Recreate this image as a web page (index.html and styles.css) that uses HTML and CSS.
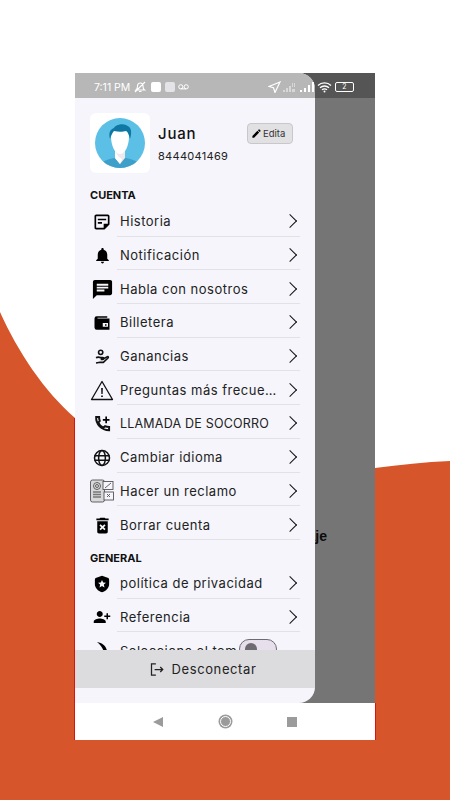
FILE: index.html
```html
<!DOCTYPE html>
<html lang="es">
<head>
<meta charset="UTF-8" />
<meta name="viewport" content="width=device-width, initial-scale=1" />
<title>Menu</title>
<link rel="stylesheet" href="styles.css">
</head>
<body>
    <svg class="backdrop" viewBox="0 0 450 800" aria-hidden="true">
        <path fill="#d6552a" d="M0 312C18 352 44 391 75 418L375 468C400 465 425 462 450 461V800H0Z" />
        <path fill="none" stroke="#d8140f" d="M74.5 418V740M375.500 703V740" />
    </svg>

    <div class="phone">
        <div class="screen">
            <div class="screen-status"></div>
            <p class="screen-text">Mensaje</p>

            <div class="status-icons">
                <div class="status-left">
                    <span class="status-time">7:11 PM</span>
                    <svg width="14" height="12" viewBox="0 0 14 12"><path fill="none" stroke="#fff" stroke-width="1.100" d="M3 9c1.500-1 1.500-2 1.500-4S6 2 7.500 2 10 3 10 5s0 3 1.500 4zM2 11 12 1M6 10.500h2.500" /></svg>
                    <span class="status-box"></span>
                    <span class="status-box status-box-mail"></span>
                    <svg width="11" height="6" viewBox="0 0 11 6"><path fill="none" stroke="#fff" d="M2.800.7a2 2 0 1 1 0 4.200 2 2 0 0 1 0-4.200zm5.400 0a2 2 0 1 1 0 4.200 2 2 0 0 1 0-4.200zM2.800 4.900h5.400" /></svg>
                </div>
                <div class="status-right">
                    <svg width="13" height="12" viewBox="0 0 13 12"><path fill="none" stroke="#fff" stroke-width="1.200" d="M12 1 1 5.500l4.500 1.200L7 11.500z" /></svg>
                    <svg width="15" height="10" viewBox="0 0 15 10"><path fill="#d8d8d8" d="M0 8h2v2H0zM3 6h2v4H3zM6 4h2v6H6zM9 1h1v4H9zM11 1h1v4h-1zM9 7h3v3H9z" /></svg>
                    <svg width="15" height="10" viewBox="0 0 15 10"><path fill="#fff" d="M0 8h2v2H0zM4 6h2v4H4zM8 3h2v7H8zM12 0h2v10h-2z" /></svg>
                    <svg width="15" height="12" viewBox="0 0 15 12"><path fill="none" stroke="#fff" stroke-width="1.300" d="M1 4.500c3.500-3.400 9.500-3.400 13 0M3 6.700c2.500-2.300 6.500-2.300 9 0M5 8.800c1.500-1.200 3.500-1.200 5 0" /><circle cx="7.500" cy="10.600" r="1" fill="#fff" /></svg>
                    <span class="battery">2</span>
                </div>
            </div>
        </div>

        <nav class="navbar">
            <span class="nav-back"></span>
            <span class="nav-home"></span>
            <span class="nav-recent"></span>
        </nav>

        <aside class="drawer">
            <div class="drawer-status"></div>

            <div class="drawer-list">
                <div class="profile">
                    <div class="avatar">
                        <svg width="50" height="50" viewBox="0 0 50 50">
                            <defs><clipPath id="avatar-clip"><circle cx="25" cy="25" r="25" /></clipPath></defs>
                            <circle cx="25" cy="25" r="25" fill="#5cc0e6" />
                            <g clip-path="url(#avatar-clip)">
                                <path fill="#3f9fcb" d="M4 50c1-6 6-8 15-10h12c9 2 14 4 15 10z" />
                                <path fill="#efe9ec" d="M20 33h10v7l-5 6-5-6z" />
                                <path fill="#fff" d="M20 33v7l5 6 2-5-4-3z" />
                                <path fill="#fff" d="M16 18c0-6 4-8 9-8s9 2 9 8c0 10-4 18-9 18s-9-8-9-18z" />
                                <path fill="#0f77a4" d="M15 21c-2-7 1-10 4-11 1-3 8-5 12-3 1 1 3 1 4 3 2 3 1 8 0 11-1-4-2-7-4-8-3 1-8 1-12 0-2 2-3 5-4 8z" />
                            </g>
                        </svg>
                    </div>
                    <div class="profile-info">
                        <div class="profile-name">Juan</div>
                        <div class="profile-phone">8444041469</div>
                    </div>
                    <button class="edit-btn">
                        <svg width="11" height="11" viewBox="0 0 24 24"><path d="M3 17.250V21h3.750L17.810 9.940l-3.750-3.750L3 17.250zM20.710 7.040c.39-.39.39-1.020 0-1.410l-2.340-2.340c-.39-.39-1.020-.39-1.410 0l-1.830 1.830 3.750 3.750 1.830-1.830z" /></svg>
                        Edita
                    </button>
                </div>

                <h2 class="section-title">CUENTA</h2>

                <div class="menu-row">
                    <span class="menu-icon"><svg width="20" height="20" viewBox="0 0 24 24"><path d="M19 5v9h-5v5H5V5h14m0-2H5c-1.100 0-2 .9-2 2v14c0 1.100.9 2 2 2h10l6-6V5c0-1.100-.9-2-2-2zm-7 11H7v-2h5v2zm5-4H7V8h10v2z" /></svg></span>
                    <div class="menu-body"><span class="menu-label">Historia</span><span class="chevron"></span></div>
                </div>
                <div class="menu-row">
                    <span class="menu-icon"><svg width="19" height="19" viewBox="0 0 24 24"><path d="M12 22c1.100 0 2-.9 2-2h-4c0 1.100.89 2 2 2zm6-6v-5c0-3.070-1.640-5.640-4.500-6.320V4c0-.83-.67-1.500-1.500-1.500s-1.500.67-1.500 1.500v.68C7.630 5.360 6 7.920 6 11v5l-2 2v1h16v-1l-2-2z" /></svg></span>
                    <div class="menu-body"><span class="menu-label">Notificación</span><span class="chevron"></span></div>
                </div>
                <div class="menu-row">
                    <span class="menu-icon"><svg width="23" height="23" viewBox="0 0 24 24"><path d="M20 2H4c-1.100 0-1.990.9-1.990 2L2 22l4-4h14c1.100 0 2-.9 2-2V4c0-1.100-.9-2-2-2zM6 9h12v2H6V9zm8 5H6v-2h8v2zm4-6H6V6h12v2z" /></svg></span>
                    <div class="menu-body"><span class="menu-label">Habla con nosotros</span><span class="chevron"></span></div>
                </div>
                <div class="menu-row">
                    <span class="menu-icon"><svg width="18" height="18" viewBox="0 0 24 24"><path fill-rule="evenodd" d="M6 3h13v2H6zM5 6h17v15H5a3 3 0 0 1-3-3V6a3 3 0 0 1 3-3h1v3zm8 6v5h7v-5zm3 1.500h2v2h-2z" /></svg></span>
                    <div class="menu-body"><span class="menu-label">Billetera</span><span class="chevron"></span></div>
                </div>
                <div class="menu-row">
                    <span class="menu-icon"><svg width="16" height="16" viewBox="0 0 24 24"><circle cx="10" cy="5" r="3.200" fill="none" stroke="#111" stroke-width="2.400" /><path fill="none" stroke="#111" stroke-width="2.400" d="M3 13c3-1.500 5-1 7 0h3.500c1.500 0 1.500 2.500 0 2.500H10M14 15l6-3.500c1.500-.5 2 1 1 2l-7 6.500H9l-6 1" /></svg></span>
                    <div class="menu-body"><span class="menu-label">Ganancias</span><span class="chevron"></span></div>
                </div>
                <div class="menu-row">
                    <span class="menu-icon"><svg width="24" height="24" viewBox="0 0 24 24"><path fill="none" stroke="#111" stroke-width="1.300" stroke-linejoin="round" d="M12 3.500 1.500 21.500h21z" /><path d="M11.200 10h1.600l-.2 6h-1.200zM11.200 17.500h1.600v1.600h-1.600z" /></svg></span>
                    <div class="menu-body"><span class="menu-label menu-label-cut">Preguntas más frecuentes</span><span class="chevron"></span></div>
                </div>
                <div class="menu-row">
                    <span class="menu-icon"><svg width="20" height="20" viewBox="0 0 24 24"><path fill="none" stroke="#111" stroke-width="2.400" d="M5 3.500h3.500c0 2 .3 3.500.8 4.800L7.500 10.500c1.300 2.700 3.300 4.700 6 6l2.200-1.800c1.300.5 2.800.8 4.800.8v4C11.500 19.500 4.500 12.500 5 3.500z" /><path d="M21 6h-3V3h-2v3h-3v2h3v3h2V8h3z" /></svg></span>
                    <div class="menu-body"><span class="menu-label menu-label-caps">LLAMADA DE SOCORRO</span><span class="chevron"></span></div>
                </div>
                <div class="menu-row">
                    <span class="menu-icon"><svg width="18" height="18" viewBox="0 0 24 24" fill="none" stroke="#111" stroke-width="2"><circle cx="12" cy="12" r="10" /><ellipse cx="12" cy="12" rx="4.500" ry="10" /><path d="M2 9h20M2 15h20" /></svg></span>
                    <div class="menu-body"><span class="menu-label">Cambiar idioma</span><span class="chevron"></span></div>
                </div>
                <div class="menu-row">
                    <span class="menu-icon"><svg width="24" height="24" viewBox="0 0 24 24" fill="none" stroke="#555" stroke-width=".9"><rect x=".5" y="1" width="14" height="22" rx="2" fill="#d9d9db" /><circle cx="7" cy="7" r="3.500" /><circle cx="7" cy="7" r="1.500" /><path d="M3 13h8M3 15.500h8M3 18h8" stroke="#777" stroke-width="1.300" /><rect x="13" y="2.500" width="10" height="8" fill="#f5f5fb" /><path d="m15 9 6-5" /><rect x="14" y="13" width="9.500" height="8" fill="#f5f5fb" /><path d="m17 15 3 3m0-3-3 3" /></svg></span>
                    <div class="menu-body"><span class="menu-label">Hacer un reclamo</span><span class="chevron"></span></div>
                </div>
                <div class="menu-row">
                    <span class="menu-icon"><svg width="21" height="21" viewBox="0 0 24 24"><path d="M6 19c0 1.100.9 2 2 2h8c1.100 0 2-.9 2-2V7H6v12zm2.460-7.120 1.410-1.410L12 12.590l2.120-2.120 1.410 1.410L13.410 14l2.120 2.120-1.410 1.410L12 15.410l-2.120 2.120-1.410-1.410L10.590 14l-2.130-2.120zM15.500 4l-1-1h-5l-1 1H5v2h14V4z" /></svg></span>
                    <div class="menu-body"><span class="menu-label">Borrar cuenta</span><span class="chevron"></span></div>
                </div>

                <h2 class="section-title section-title-general">GENERAL</h2>

                <div class="menu-row">
                    <span class="menu-icon"><svg width="18" height="18" viewBox="0 0 24 24"><path d="M12 1 4.500 3.500C3 4 2.500 5 2.500 6.500V12c0 5 4 9.500 9.500 11 5.500-1.500 9.500-6 9.500-11V6.500c0-1.500-.5-2.500-2-3z" /><path fill="#f5f5fb" d="m12 6.500 1.600 3.400 3.700.4-2.800 2.500.8 3.700-3.300-1.900-3.300 1.900.8-3.700-2.800-2.500 3.700-.4z" /></svg></span>
                    <div class="menu-body"><span class="menu-label">política de privacidad</span><span class="chevron"></span></div>
                </div>
                <div class="menu-row">
                    <span class="menu-icon"><svg width="18" height="18" viewBox="0 0 24 24"><g transform="matrix(-1 0 0 1 24 0)"><path d="M15 12c2.210 0 4-1.790 4-4s-1.790-4-4-4-4 1.790-4 4 1.790 4 4 4zm-9-2V7H4v3H1v2h3v3h2v-3h3v-2H6zm9 4c-2.670 0-8 1.340-8 4v2h16v-2c0-2.660-5.330-4-8-4z" /></g></svg></span>
                    <div class="menu-body"><span class="menu-label">Referencia</span><span class="chevron"></span></div>
                </div>
                <div class="menu-row menu-row-theme">
                    <span class="menu-icon"><svg width="24" height="24" viewBox="0 0 24 24"><path d="M7 3c7 1 11 6 10 13-.3 2-1 4-2 5 .2-7-2-13-8-18z" /></svg></span>
                    <span class="menu-label">Selecciona el tem</span>
                    <span class="theme-switch"><span class="theme-thumb"></span></span>
                </div>
            </div>

            <div class="logout">
                <svg width="15" height="15" viewBox="0 0 24 24" fill="none" stroke="#222" stroke-width="2"><path d="M11 3H4v18h7M9 12h13M18 8l4 4-4 4" /></svg>
                <span>Desconectar</span>
            </div>
        </aside>
    </div>
</body>
</html>
```

FILE: styles.css
```css
html, body {
    height: 100%;
}

body {
    margin: 0;
    background: #ffffff;
    font-family: "Inter", "Liberation Sans", sans-serif;
    color: #222222;
    overflow: hidden;
}

.backdrop {
    position: absolute;
    top: 0;
    left: 0;
    width: 450px;
    height: 800px;
}

.phone {
    position: relative;
    display: flex;
    flex-direction: column;
    width: 300px;
    height: 667px;
    margin: 73px 0 0 75px;
    overflow: hidden;
}

/* page behind the drawer, dimmed */
.screen {
    flex: 1;
    background: #757575;
}

.screen-status {
    height: 25px;
    background: #555555;
}

.screen-text {
    width: 252px;
    margin: 430px 0 0;
    text-align: right;
    font-family: "Liberation Sans", sans-serif;
    font-size: 14px;
    font-weight: 700;
    color: #0c0c0c;
}

.status-icons {
    position: absolute;
    top: 0;
    left: 0;
    right: 0;
    z-index: 3;
    height: 25px;
    display: flex;
    align-items: center;
    justify-content: space-between;
    padding: 3px 21px 0 19px;
    box-sizing: border-box;
}

.status-left,
.status-right {
    display: flex;
    align-items: center;
    gap: 3px;
}

.status-right {
    gap: 2px;
}

.status-time {
    font-size: 10.500px;
    color: #ffffff;
}

.status-box {
    width: 10px;
    height: 10px;
    background: #ffffff;
    border-radius: 2px;
    margin-left: 1px;
}

.status-box-mail {
    background: #e4e4e8;
}

.battery {
    width: 17px;
    height: 8px;
    margin-left: 1px;
    border: 1px solid #ffffff;
    border-radius: 2px;
    font-size: 7px;
    line-height: 8px;
    text-align: center;
    color: #ffffff;
}

.navbar {
    height: 37px;
    display: flex;
    align-items: center;
    background: #ffffff;
    padding: 0 78px;
    justify-content: space-between;
}

.nav-back {
    width: 0;
    height: 0;
    border-top: 5px solid transparent;
    border-bottom: 5px solid transparent;
    border-right: 10px solid #9b9b9b;
}

.nav-home {
    width: 9px;
    height: 9px;
    background: #9b9b9b;
    border-radius: 50%;
    border: 1px solid #ffffff;
    box-shadow: 0 0 0 1.500px #9b9b9b;
}

.nav-recent {
    width: 10px;
    height: 10px;
    background: #9b9b9b;
}

/* drawer */
.drawer {
    position: absolute;
    top: 0;
    left: 0;
    z-index: 2;
    width: 240px;
    height: 630px;
    display: flex;
    flex-direction: column;
    background: #f5f5fb;
    border-radius: 0 16px 16px 0;
    overflow: hidden;
    padding-bottom: 15px;
    box-sizing: border-box;
}

.drawer-status {
    height: 25px;
    flex-shrink: 0;
    background: #b7b7b7;
}

.drawer-list {
    flex: 1;
    overflow: hidden;
}

.profile {
    display: flex;
    align-items: flex-start;
    padding: 15px 22px 0 15px;
}

.avatar {
    width: 60px;
    height: 60px;
    display: flex;
    align-items: center;
    justify-content: center;
    flex-shrink: 0;
    background: #ffffff;
    border-radius: 6px;
}

.profile-info {
    flex: 1;
    margin-left: 8px;
    padding-top: 11px;
}

.profile-name {
    font-size: 15px;
    font-weight: 500;
    letter-spacing: 0.8px;
    color: #111111;
}

.profile-phone {
    margin-top: 6px;
    font-size: 11px;
    letter-spacing: 0.3px;
}

.edit-btn {
    display: flex;
    align-items: center;
    gap: 1px;
    height: 21px;
    width: 46px;
    margin-top: 10px;
    padding: 0 3px;
    background: #e1e1e4;
    border: 1px solid #c8c8cb;
    border-radius: 4px;
    font-family: inherit;
    font-size: 9.500px;
    color: #333333;
}

.section-title {
    margin: 15px 0 0 15px;
    font-size: 11px;
    line-height: 15px;
    font-weight: 700;
    color: #111111;
}

.section-title-general {
    margin-top: 11px;
    line-height: 14px;
}

.menu-row {
    display: flex;
    align-items: center;
    height: 33.700px;
    padding: 0 15px;
    box-sizing: content-box;
}

.menu-icon {
    display: flex;
    align-items: center;
    justify-content: center;
    width: 24px;
    margin-right: 3px;
    padding-top: 4px;
    flex-shrink: 0;
}

.menu-body {
    flex: 1;
    min-width: 0;
    height: 100%;
    display: flex;
    align-items: center;
    justify-content: space-between;
    padding: 4px 5px 0 3px;
    border-bottom: 1px solid #e2e2e6;
    box-sizing: border-box;
}

.menu-label {
    font-size: 13px;
    letter-spacing: 0.5px;
    white-space: nowrap;
}

.menu-label-cut {
    max-width: 164px;
    overflow: hidden;
    text-overflow: ellipsis;
}

.menu-label-caps {
    font-size: 12.500px;
    letter-spacing: 0.2px;
}

.chevron {
    width: 9px;
    height: 9px;
    flex-shrink: 0;
    border-top: 1.600px solid #111111;
    border-right: 1.600px solid #111111;
    transform: rotate(45deg);
}

.menu-row-theme .menu-label {
    margin-left: 3px;
    padding-top: 4px;
}

.theme-switch {
    width: 38px;
    height: 20px;
    margin-left: 2px;
    display: flex;
    align-items: center;
    flex-shrink: 0;
    padding-left: 5px;
    box-sizing: border-box;
    background: #e8dfec;
    border: 1.500px solid #6f6a72;
    border-radius: 10px;
}

.theme-thumb {
    width: 12px;
    height: 12px;
    border-radius: 50%;
    background: #6f6a72;
}

.logout {
    flex-shrink: 0;
    height: 38px;
    display: flex;
    align-items: center;
    justify-content: center;
    gap: 8px;
    background: #dcdcde;
    font-size: 13px;
    letter-spacing: 0.6px;
    padding-left: 15px;
}
```
